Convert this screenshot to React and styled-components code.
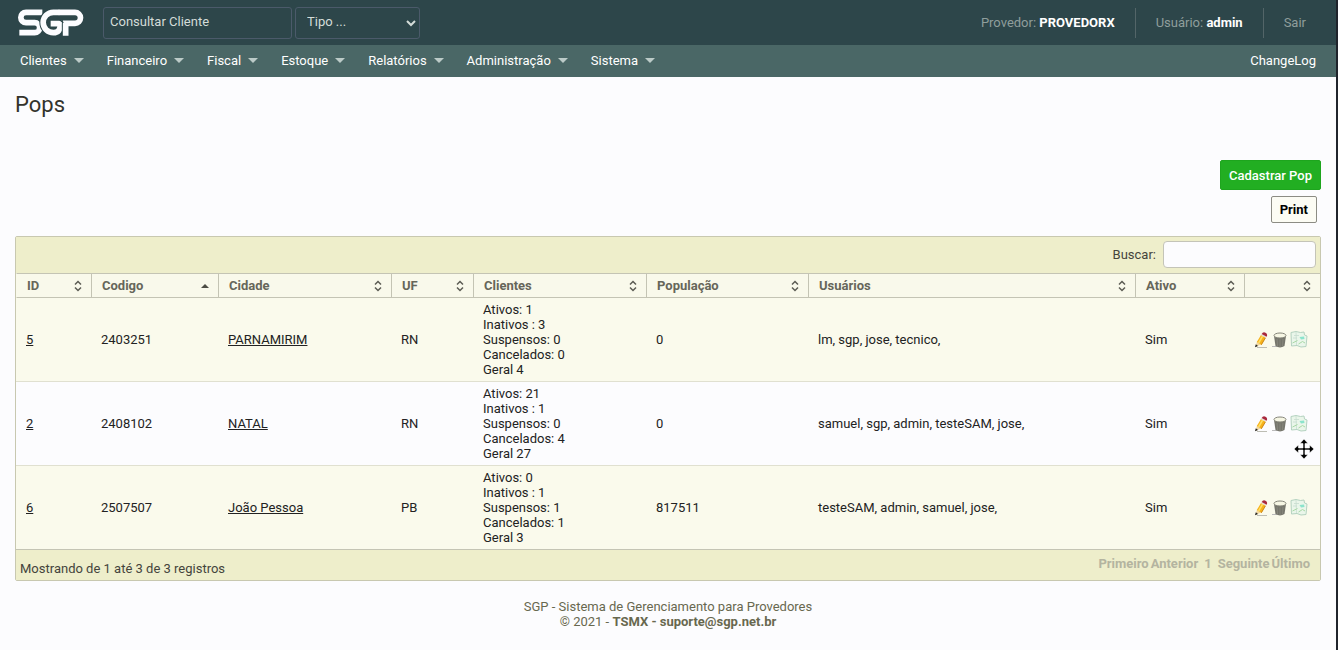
import styled, { createGlobalStyle } from 'styled-components';

const MENU = [
  'Clientes',
  'Financeiro',
  'Fiscal',
  'Estoque',
  'Relatórios',
  'Administração',
  'Sistema',
];

const COLUMNS = [
  { title: 'ID', width: 75 },
  { title: 'Codigo', width: 127, sorted: true },
  { title: 'Cidade', width: 173 },
  { title: 'UF', width: 82 },
  { title: 'Clientes', width: 173 },
  { title: 'População', width: 162 },
  { title: 'Usuários' },
  { title: 'Ativo', width: 109 },
  { title: '', width: 76 },
];

const POPS = [
  {
    id: 5,
    codigo: '2403251',
    cidade: 'PARNAMIRIM',
    uf: 'RN',
    clientes: ['Ativos: 1', 'Inativos : 3', 'Suspensos: 0', 'Cancelados: 0', 'Geral 4'],
    populacao: 0,
    usuarios: 'lm, sgp, jose, tecnico,',
    ativo: 'Sim',
  },
  {
    id: 2,
    codigo: '2408102',
    cidade: 'NATAL',
    uf: 'RN',
    clientes: ['Ativos: 21', 'Inativos : 1', 'Suspensos: 0', 'Cancelados: 4', 'Geral 27'],
    populacao: 0,
    usuarios: 'samuel, sgp, admin, testeSAM, jose,',
    ativo: 'Sim',
  },
  {
    id: 6,
    codigo: '2507507',
    cidade: 'João Pessoa',
    uf: 'PB',
    clientes: ['Ativos: 0', 'Inativos : 1', 'Suspensos: 1', 'Cancelados: 1', 'Geral 3'],
    populacao: 817511,
    usuarios: 'testeSAM, admin, samuel, jose,',
    ativo: 'Sim',
  },
];

const Logo = () => (
  <svg width="66" height="27" viewBox="54 28 198 81" fill="none" stroke="#fcfcff" strokeWidth="17">
    <path d="M127 38H78a15 15 0 0 0 0 31h26a14 14 0 0 1 0 30H58" />
    <path d="M176 38h-16a30 30 0 0 0 0 61c15 0 21-9 21-27h-31" stroke="#2d464a" strokeWidth="23" />
    <path d="M178 38h-18a30 30 0 0 0 0 61c15 0 21-9 21-27h-29" />
    <path d="M186 71h11v38" stroke="#2d464a" strokeWidth="23" />
    <path d="M176 38h49a16 16 0 0 1 0 33h-28v37" />
    <path d="M172 54l18 15" stroke="#2d464a" strokeWidth="4" />
  </svg>
);

const SortIcon = ({ sorted }) =>
  sorted ? (
    <svg width="8" height="12" viewBox="0 0 8 12">
      <path d="M0 8l4-4 4 4z" fill="#4c4c44" />
    </svg>
  ) : (
    <svg width="8" height="12" viewBox="0 0 8 12" fill="none" stroke="#5c5c54" strokeWidth="1.5">
      <path d="M1 4.5l3-3 3 3M1 7.5l3 3 3-3" />
    </svg>
  );

const PencilIcon = () => (
  <svg width="16" height="16" viewBox="0 0 16 16">
    <path d="M3 15.5h10" stroke="#bdbdb4" />
    <path d="M1.500 15l1.500-5.500 4 3z" fill="#f2d8a0" />
    <path d="M1 15.300l.8-3 2.200 1.700z" fill="#222" />
    <path d="M2.800 10L7 3l4.700 2.800L7.500 13z" fill="#f6b21c" />
    <path d="M4.600 11L8.700 4" stroke="#ffe066" strokeWidth="1.500" />
    <path d="M7.300 12.800l4.200-7" stroke="#c07a14" strokeWidth=".8" />
    <path d="M7 3l.8-1.200L12.500 4.500l-.8 1.300z" fill="#e4dcd8" />
    <path d="M7.700 2Q9-.5 11.500.7t1.200 4z" fill="#a8283c" />
  </svg>
);

const TrashIcon = () => (
  <svg width="16" height="16" viewBox="0 0 16 16">
    <path d="M0 14.500h5" stroke="#bbb" />
    <path d="M2 4l1.500 10q4.500 2.800 9 0L14 4z" fill="#75756c" />
    <path d="M5 7l.5 7M8 7.500v7.500M11 7l-.5 7" stroke="#8c8c82" strokeWidth=".8" />
    <ellipse cx="8" cy="3.500" rx="6" ry="2.500" fill="#f6f6e4" stroke="#85857a" />
  </svg>
);

const MapIcon = () => (
  <svg width="18" height="17" viewBox="0 0 18 17">
    <path d="M1 1.500l5-1 4.500 1 3.500-.5.500 3 2.500 1-1 10.500-5 .5-4-1.500-5.500.5z" fill="#eaf6ea" stroke="#b4d2c0" />
    <path d="M6 1l.5 13M4 4.500h5M3 7h4" stroke="#c6dccf" strokeWidth=".8" />
    <path d="M9.500 6l4.500-.5.500 2.500-3.500.5z" fill="#8be4cc" />
    <path d="M2.500 12l5-2.500M8.500 13l4-2.500 2.500 1.500" stroke="#a9d9a6" fill="none" />
  </svg>
);

const MoveCursor = () => (
  <Pointer width="20" height="20" viewBox="0 0 20 20">
    <path
      d="M10 0l4 4.500h-3V9h4.500V6L20 10l-4.500 4v-3H11v4.500h3L10 20l-4-4.500h3V11H4.500v3L0 10l4.500-4v3H9V4.500H6z"
      fill="#000"
      stroke="#fff"
      strokeWidth=".6"
    />
  </Pointer>
);

const App = () => {
  return (
    <Page>
      <GlobalStyle />
      <Header>
        <LogoLink href="#" aria-label="SGP">
          <Logo />
        </LogoLink>
        <SearchInput type="text" placeholder="Consultar Cliente" aria-label="Consultar Cliente" />
        <TypeSelect aria-label="Tipo">
          <option>Tipo ...</option>
        </TypeSelect>
        <UserInfo>
          <li>
            Provedor: <strong>PROVEDORX</strong>
          </li>
          <li>
            Usuário: <strong>admin</strong>
          </li>
          <li>
            <a href="#">Sair</a>
          </li>
        </UserInfo>
      </Header>
      <Nav>
        {MENU.map(item => (
          <MenuLink href="#" key={item}>
            {item}
            <Caret />
          </MenuLink>
        ))}
        <ChangeLog href="#">ChangeLog</ChangeLog>
      </Nav>
      <Main>
        <Title>Pops</Title>
        <Actions>
          <AddButton>Cadastrar Pop</AddButton>
          <PrintButton>Print</PrintButton>
        </Actions>
        <Panel>
          <Toolbar>
            <label htmlFor="buscar">Buscar:</label>
            <FilterInput id="buscar" type="text" />
          </Toolbar>
          <Table>
            <colgroup>
              {COLUMNS.map(({ title, width }) => (
                <col key={title} width={width} />
              ))}
            </colgroup>
            <thead>
              <tr>
                {COLUMNS.map(({ title, sorted }) => (
                  <th key={title}>
                    <HeadCell>
                      <span>{title}</span>
                      <SortIcon sorted={sorted} />
                    </HeadCell>
                  </th>
                ))}
              </tr>
            </thead>
            <tbody>
              {POPS.map(pop => (
                <tr key={pop.id}>
                  <td>
                    <a href="#">{pop.id}</a>
                  </td>
                  <td>{pop.codigo}</td>
                  <td>
                    <a href="#">{pop.cidade}</a>
                  </td>
                  <td>{pop.uf}</td>
                  <td>
                    {pop.clientes.map(line => (
                      <div key={line}>{line}</div>
                    ))}
                  </td>
                  <td>{pop.populacao}</td>
                  <td>{pop.usuarios}</td>
                  <td>{pop.ativo}</td>
                  <td>
                    <RowActions>
                      <a href="#" aria-label="Editar">
                        <PencilIcon />
                      </a>
                      <a href="#" aria-label="Excluir">
                        <TrashIcon />
                      </a>
                      <a href="#" aria-label="Mapa">
                        <MapIcon />
                      </a>
                    </RowActions>
                  </td>
                </tr>
              ))}
            </tbody>
          </Table>
          <TableFooter>
            <Info>Mostrando de 1 até 3 de 3 registros</Info>
            <Pagination>
              <button>Primeiro</button>
              <button>Anterior</button>
              <PageNumber>1</PageNumber>
              <button>Seguinte</button>
              <button>Último</button>
            </Pagination>
          </TableFooter>
        </Panel>
      </Main>
      <Footer>
        <p>SGP - Sistema de Gerenciamento para Provedores</p>
        <p>
          © 2021 - <strong>TSMX - suporte@sgp.net.br</strong>
        </p>
      </Footer>
      <MoveCursor />
    </Page>
  );
};

const GlobalStyle = createGlobalStyle`
  * {
    box-sizing: border-box;
  }
  body {
    margin: 0;
    background-color: #fcfcfe;
  }
  body, input, select, button {
    font-family: Roboto, "Liberation Sans", sans-serif;
    font-size: 13px;
    line-height: 15px;
  }
  a {
    color: inherit;
    text-decoration: none;
  }
  p {
    margin: 0;
  }
`;

const Page = styled.div`
  position: relative;
  min-height: 100vh;
  border-right: 2px solid #20242c;
  color: #222;
`;

const Header = styled.header`
  display: flex;
  align-items: center;
  height: 45px;
  padding: 0 10px 0 18px;
  background-color: #2d464a;
`;

const LogoLink = styled.a`
  display: flex;
  margin-right: 19px;
`;

const SearchInput = styled.input`
  width: 189px;
  height: 32px;
  margin-right: 3px;
  padding: 0 6px 2px;
  border: 1px solid #4b5a6a;
  border-radius: 3px;
  background-color: transparent;
  color: #d4dcd8;

  &::placeholder {
    color: #d4dcd8;
  }
`;

const TypeSelect = styled.select`
  width: 125px;
  height: 32px;
  padding: 0 0 2px 7px;
  border: 1px solid #4b5a6a;
  border-radius: 3px;
  background-color: #2d464a;
  color: #d4dcd8;
`;

const UserInfo = styled.ul`
  display: flex;
  margin: 0 0 0 auto;
  padding: 0;
  list-style: none;
  color: #8f9e9c;

  li {
    padding: 0 20px;
    line-height: 30px;
  }
  li + li {
    border-left: 1px solid #536568;
  }
  strong {
    color: #fff;
  }
`;

const Nav = styled.nav`
  display: flex;
  align-items: center;
  gap: 23px;
  height: 32px;
  padding: 0 20px 2px;
  background-color: #4a6766;
  color: #fff;
`;

const MenuLink = styled.a`
  display: flex;
  align-items: center;
  gap: 7px;
`;

const Caret = styled.span`
  border: 5px solid transparent;
  border-top-color: #bccbc8;
  border-bottom: 0;
`;

const ChangeLog = styled.a`
  margin-left: auto;
`;

const Main = styled.main`
  padding: 15px 15px 0;
`;

const Title = styled.h1`
  margin: 0;
  color: #33332c;
  font-size: 22px;
  font-weight: 400;
  line-height: 26px;
`;

const Actions = styled.div`
  display: flex;
  flex-direction: column;
  align-items: flex-end;
  gap: 6px;
  margin: 42px 0 13px;
`;

const AddButton = styled.button`
  height: 30px;
  padding: 0 8px;
  border: 1px solid #1ea51e;
  border-radius: 2px;
  background-color: #22ae22;
  color: #fff;
  font-weight: 500;
`;

const PrintButton = styled.button`
  height: 27px;
  margin-right: 4px;
  padding: 0 8px;
  border: 1px solid #8c8c84;
  border-radius: 2px;
  background-color: #fcfcf4;
  color: #000;
  font-weight: 700;
`;

const Panel = styled.section`
  border: 1px solid #c8c8b0;
  border-radius: 2px;
`;

const Toolbar = styled.div`
  display: flex;
  align-items: center;
  justify-content: flex-end;
  gap: 7px;
  height: 36px;
  padding: 0 4px 2px;
  background-color: #eeeecb;
  color: #44443c;
`;

const FilterInput = styled.input`
  width: 153px;
  height: 27px;
  padding: 0 6px;
  border: 1px solid #c4c4b8;
  border-radius: 4px;
  background-color: #fcfcfe;
`;

const Table = styled.table`
  width: 100%;
  table-layout: fixed;
  border-spacing: 0;

  th {
    height: 25px;
    padding: 0 9px 0 10px;
    border: solid #c4c4b4;
    border-width: 1px 0 1px 1px;
    background-color: #f9f9eb;
    color: #66665a;
    font-weight: 700;
    text-align: left;
  }
  th:first-child {
    border-left-color: #f9f9eb;
  }
  td {
    height: 84px;
    padding: 4px 10px;
    border-bottom: 1px solid #e0e0d0;
  }
  tbody tr:nth-child(odd) {
    background-color: #fafaec;
  }
  tbody tr:last-child td {
    border-bottom-color: #c4c4b4;
  }
  td > a {
    text-decoration: underline;
  }
`;

const HeadCell = styled.div`
  display: flex;
  align-items: center;
  justify-content: space-between;
`;

const RowActions = styled.div`
  display: flex;
  align-items: center;
  gap: 2px;

  a {
    display: flex;
  }
`;

const TableFooter = styled.div`
  display: flex;
  justify-content: space-between;
  height: 30px;
  padding: 0 4px;
  background-color: #eeeecb;
`;

const Info = styled.p`
  align-self: flex-end;
  padding-bottom: 4px;
  color: #44443c;
`;

const Pagination = styled.div`
  display: flex;
  gap: 2px;
  padding: 6px 6px 0 0;
  color: #b4b4a0;
  font-weight: 700;

  button {
    height: 15px;
    padding: 0;
    border: 0;
    background: none;
    color: inherit;
    font-weight: inherit;
  }
`;

const PageNumber = styled.span`
  padding: 0 4px;
`;

const Footer = styled.footer`
  padding: 18px 0;
  color: #68684f;
  text-align: center;
`;

const Pointer = styled.svg`
  position: absolute;
  top: 439px;
  right: 22px;
  pointer-events: none;
`;

export default App;
